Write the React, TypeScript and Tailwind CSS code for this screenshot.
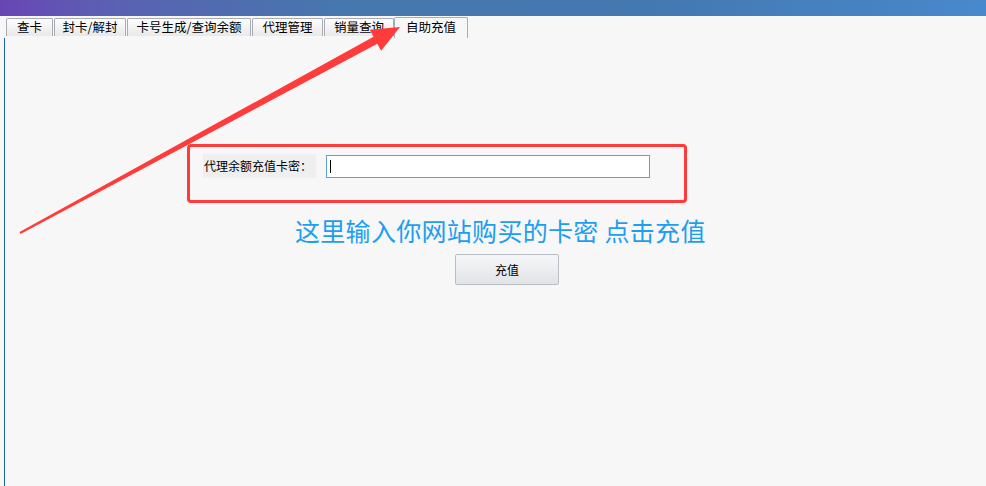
/* Agent recharge page - tabbed panel with recharge card input */
const tabs = [
    { label: '查卡', w: 'w-[47px]' },
    { label: '封卡/解封', w: 'w-[72px]' },
    { label: '卡号生成/查询余额', w: 'w-[124px]' },
    { label: '代理管理', w: 'w-[71px]' },
    { label: '销量查询', w: 'w-[70px]' },
];

export default function App() {
    return (
        <div className="relative w-[986px] h-[486px] overflow-hidden bg-[#f7f7f7] font-['Noto_Sans_CJK_SC',sans-serif] text-[12px] text-black">
            {/* title bar strip */}
            <div className="h-4 bg-[linear-gradient(90deg,#6846b4_0%,#5a62b2_12%,#4677ad_35%,#4478b0_65%,#4888cc_100%)]" />

            {/* tab strip */}
            <div className="flex items-end h-[22px] pl-[6px]">
                {tabs.map((t) => (
                    <div
                        key={t.label}
                        className={`${t.w} h-[18px] mb-[2px] mr-px flex items-center justify-center border border-[#a9adb3] border-b-0 rounded-t-[2px] bg-[linear-gradient(#fdfdfd,#e9e9e9)] text-[12.5px] leading-none`}
                    >
                        {t.label}
                    </div>
                ))}
                <div className="w-[74px] h-[21px] -ml-px flex items-center justify-center border border-[#9fb0c2] border-b-0 rounded-t-[2px] bg-[#f7f7f7] text-[12.5px] leading-none pb-[2px]">
                    自助充值
                </div>
            </div>

            {/* page body */}
            <div className="flex h-[448px]">
                <div className="w-px ml-1 bg-[#1c68a6]" />
                <div className="flex-1 flex flex-col">
                    <div className="flex items-center mt-[116px] ml-[198px]">
                        <div className="w-[113px] h-6 flex items-center pl-px bg-[#efefef] leading-none">
                            代理余额充值卡密：
                        </div>
                        <div className="ml-[10px] w-[324px] h-[23px] border border-[#5aa2dc] bg-white flex items-center pl-[3px]">
                            <div className="w-px h-[13px] bg-black" />
                        </div>
                    </div>
                    <div className="mt-[38px] ml-[290px] text-[25px] tracking-[0.3px] leading-[29px] text-[#1d9ef0] whitespace-nowrap">
                        这里输入你网站购买的卡密 点击充值
                    </div>
                    <button className="mt-[9px] ml-[450px] w-[104px] h-[31px] border border-[#b9bec6] rounded-[2px] bg-[linear-gradient(#f5f6f7,#e1e4e8)] text-[12px] leading-none">
                        充值
                    </button>
                </div>
            </div>

            {/* red annotation box */}
            <div className="absolute left-[187px] top-[144px] w-[500px] h-[59px] border-[3px] border-[#ff3b3b] rounded-[4px]" />

            {/* red annotation arrow */}
            <svg className="absolute left-0 top-0" width="986" height="486" viewBox="0 0 986 486">
                <polygon
                    points="19.5,232.1 373.5,36.8 369.7,29.8 400,27 381.1,50.8 377.3,43.8 20.5,233.9"
                    fill="#ff3b3b"
                />
            </svg>
        </div>
    );
}
